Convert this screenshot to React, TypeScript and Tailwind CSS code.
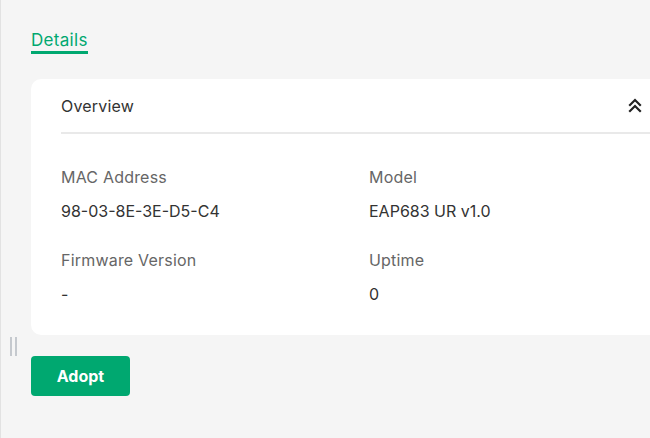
import React from "react";

const fields = [
  { label: "MAC Address", value: "98-03-8E-3E-D5-C4" },
  { label: "Model", value: "EAP683 UR v1.0" },
  { label: "Firmware Version", value: "-" },
  { label: "Uptime", value: "0" },
];

function ChevronsUp() {
  return (
    <svg width="14" height="15" viewBox="0 0 14 15" fill="none" stroke="#222" strokeWidth="2.2" strokeLinecap="square">
      <path d="M2 7 L7 2 L12 7" />
      <path d="M2 13 L7 8 L12 13" />
    </svg>
  );
}

export default function App() {
  return (
    <div
      className="relative w-[650px] h-[438px] overflow-hidden bg-[#f5f5f5] border-l border-[#e2e2e2] text-[#333]"
      style={{ fontFamily: "Inter, 'Noto Sans', sans-serif" }}
    >
      <div className="pl-[30px] pt-[28px]">
        <div className="inline-flex flex-col">
          <span className="text-[17px] leading-[24px] tracking-[0.3px] text-[#00a870]">Details</span>
          <span className="mt-[-1px] h-[3px] bg-[#00a870]" />
        </div>

        <div className="mt-[25px] w-[680px] bg-white rounded-[10px] pl-[30px] pb-[29px]">
          <div className="h-[53px] flex items-center justify-between pr-[69px]">
            <span className="text-[16px] tracking-[0.2px] text-[#333]">Overview</span>
            <ChevronsUp />
          </div>
          <div className="h-[2px] bg-[#e9e9e9]" />
          <div className="grid grid-cols-[308px_1fr] gap-y-[25px] pt-[31px]">
            {fields.map((f) => (
              <div key={f.label} className="flex flex-col gap-[10px]">
                <span className="text-[16px] leading-[24px] tracking-[0.2px] text-[#666]">{f.label}</span>
                <span className="text-[16px] leading-[24px] text-[#333]">{f.value}</span>
              </div>
            ))}
          </div>
        </div>

        <button className="mt-[21px] w-[99px] h-[40px] rounded-[4px] bg-[#00a870] text-white text-[16px] font-bold">
          Adopt
        </button>
      </div>

      <div className="absolute left-[9px] top-[337px] flex gap-[3px]">
        <span className="w-[2px] h-[19px] bg-[#c5c9ce]" />
        <span className="w-[2px] h-[19px] bg-[#c5c9ce]" />
      </div>
    </div>
  );
}
